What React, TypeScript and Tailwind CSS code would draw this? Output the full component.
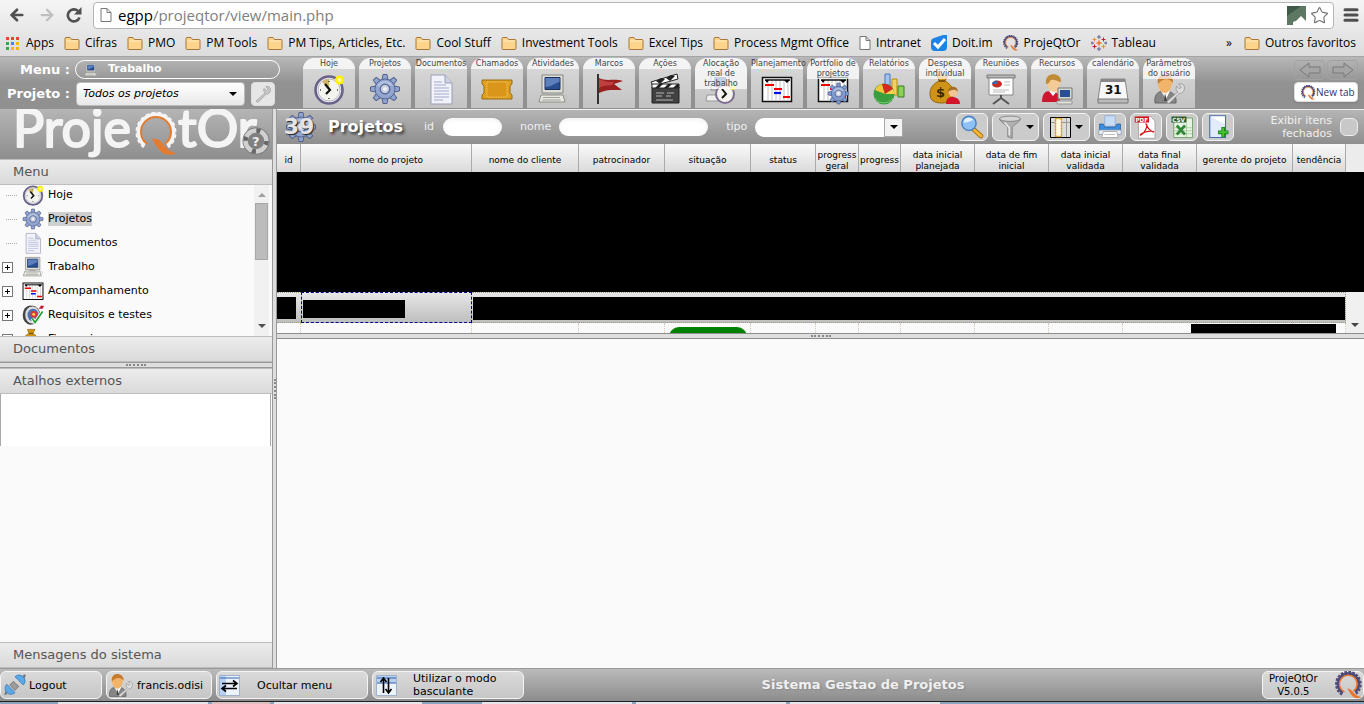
import React, { useState } from "react";
import { ArrowLeft, ArrowRight, Star, Menu as MenuIcon } from "lucide-react";

type IconProps = { className?: string };

const Svg = ({ className = "h-8 w-8", children }: { className?: string; children: React.ReactNode }) => (
  <svg viewBox="0 0 32 32" className={`shrink-0 ${className}`} aria-hidden="true">
    {children}
  </svg>
);

const ClockIcon = ({ className }: IconProps) => (
  <Svg className={className}>
    <circle cx="16" cy="17" r="13.5" fill="#efeff2" stroke="#6a6289" strokeWidth="2.6" />
    <circle cx="16" cy="17" r="11" fill="#f4f4ef" stroke="#b9b7c8" strokeWidth="1" />
    <path d="M16 17 9 8.5a10 10 0 0 1 7-2.3z" fill="#d2b566" />
    <path d="m12 11 5 6-4 4" fill="none" stroke="#111" strokeWidth="2.2" />
    <path d="M16 8v1M16 25v1M7 17h1M24 17h1" stroke="#444" strokeWidth="1.5" />
    <circle cx="26.5" cy="7" r="4.5" fill="#fff000" />
    <circle cx="26.5" cy="7" r="2" fill="#fffcb0" />
  </Svg>
);

const GearShape = ({ fill = "#92a5d0" }: { fill?: string }) => (
  <g>
    <g fill={fill} stroke="#53628e" strokeWidth="1">
      {[0, 45, 90, 135, 180, 225, 270, 315].map((angle) => (
        <path key={angle} d="m13 7 1-5.500h4L19 7z" transform={`rotate(${angle} 16 16)`} />
      ))}
      <circle cx="16" cy="16" r="10" />
    </g>
    <circle cx="16" cy="16" r="9.3" fill={fill} />
    <path d="M8 13a9 9 0 0 1 16 0c-5-2-11 3-16 0" fill="#c2cde6" opacity=".7" />
    <circle cx="16" cy="16" r="4.8" fill="#c6cee0" stroke="#53628e" strokeWidth="1.2" />
    <circle cx="16" cy="16" r="2" fill="#eef0f5" />
  </g>
);

const GearIcon = ({ className }: IconProps) => (
  <Svg className={className}>
    <GearShape />
  </Svg>
);

const DocIcon = ({ className }: IconProps) => (
  <Svg className={className}>
    <path d="M6 2h14l7 8v21H6z" fill="#f1f2fa" stroke="#9a9fb6" />
    <path d="M20 2v8h7" fill="#cdd2e6" stroke="#9a9fb6" />
    <path d="M9 9h8M9 12h12M9 15h15M9 18h15M9 21h15M9 24h15M9 27h9" stroke="#c9cee4" strokeWidth="1.8" />
  </Svg>
);

const TicketIcon = ({ className }: IconProps) => (
  <Svg className={className}>
    <path d="M1 7h30v4l-2 2v7l2 2v4H1v-4l2-2v-7l-2-2z" fill="#e0a022" stroke="#9c6a08" />
    <path d="M6 9h20v15H6z" fill="#d9961a" stroke="#f2c45c" strokeDasharray="1.5 1" />
  </Svg>
);

const ComputerIcon = ({ className }: IconProps) => (
  <Svg className={className}>
    <path d="M5 2h21v18H5z" fill="#dfdfda" stroke="#85857f" />
    <path d="M8 4.500h15v12H8z" fill="#294f92" stroke="#1a2f5e" />
    <path d="M8.500 5h14v4c-5 1-8 5-14 5z" fill="#5d80bc" />
    <path d="M11 20h9v2h-9z" fill="#b5b5af" />
    <path d="M4 22h22l2 7H2z" fill="#e9e9e4" stroke="#8e8e88" />
    <path d="M6 24.500h17M5.500 27h18" stroke="#a2a29c" />
    <path d="M27 22c4 0 3 4 1 5" fill="none" stroke="#bbb" />
  </Svg>
);

const FlagIcon = ({ className }: IconProps) => (
  <Svg className={className}>
    <path d="M4 1h2v30H4z" fill="#333" />
    <path d="M6 5c8 4 14 0 24 3l-9 3 8 6c-9 0-15-1-23 3z" fill="#9a2020" />
    <path d="M6 6c7 3 10 3 15 3l-2 3c-5 1-9 0-13 3z" fill="#c94848" opacity=".8" />
  </Svg>
);

const ClapIcon = ({ className }: IconProps) => (
  <Svg className={className}>
    <path d="M2 9 28 1l1 5L4 13z" fill="#fff" stroke="#222" />
    <path d="m7 8 4 3 5-5-4-1zM17 5l4 3 5-5-4-1z" fill="#222" />
    <path d="M3 14h27v16H3z" fill="#414141" stroke="#222" />
    <path d="M3 11h27v4H3z" fill="#fff" stroke="#222" />
    <path d="m6 15 4-4h4l-4 4zM15 15l4-4h4l-4 4zM24 15l4-4h2v3l-1 1z" fill="#222" />
    <path d="M7 20h8m3 0h7M7 23h6m4 0h5M7 27h17" stroke="#b5b5b5" />
  </Svg>
);

const GanttShape = () => (
  <g>
    <path d="M1.500 4.500h29v24h-29z" fill="#fff" stroke="#111" strokeWidth="1.5" />
    <path d="M7 6v21M11 6v21M15 6v21M19 6v21M23 6v21M27 6v21" stroke="#c4c4c4" />
    <path d="M4 7h25" stroke="#111" strokeWidth="1.5" />
    <path d="m4 7 2 3 2-3zm19 0 3 3 3-3z" />
    <path d="M4 12h9M13 16h8M22 24h7" stroke="#f00000" strokeWidth="2.2" />
    <path d="M13 20h7" stroke="#0011f0" strokeWidth="2.2" />
  </g>
);

const GanttIcon = ({ className }: IconProps) => (
  <Svg className={className}>
    <GanttShape />
  </Svg>
);

const WorkClockIcon = ({ className }: IconProps) => (
  <Svg className={className}>
    <path d="M6 1h18v16H6z" fill="#dfdfda" stroke="#85857f" />
    <path d="M9 4h12v10H9z" fill="#3f63a4" />
    <path d="M2 22h20v6H1z" fill="#eee" stroke="#999" />
    <circle cx="20" cy="21" r="9" fill="#f5f3ee" stroke="#7e6d93" strokeWidth="2" />
    <path d="m17 16 4 5-4 4" fill="none" stroke="#111" strokeWidth="2" />
    <circle cx="28" cy="14" r="3" fill="#ffe94a" />
  </Svg>
);

const PortfolioIcon = ({ className }: IconProps) => (
  <Svg className={className}>
    <GanttShape />
    <g transform="translate(10 9) scale(.72)">
      <GearShape fill="#7d9bcf" />
    </g>
  </Svg>
);

const ChartIcon = ({ className }: IconProps) => (
  <Svg className={className}>
    <path d="M12 1h5v16h-5z" fill="#a3c4f2" stroke="#4a77bb" />
    <path d="M19 6h5v16h-5z" fill="#f5d065" stroke="#b98a12" />
    <path d="M25 13h6v11h-6z" fill="#8cd05a" stroke="#35801a" />
    <circle cx="11" cy="21" r="10.5" fill="#3a9e3d" />
    <path d="M2 25c2 6 14 7 18 0" fill="none" stroke="#7cc97e" />
    <path d="m12 21-10-4a10 10 0 0 1 7-6z" fill="#f2c53c" />
    <path d="m12 21-3-10a10 10 0 0 1 11 5z" fill="#d22a20" />
    <path d="m12 21 8-5 2 5z" fill="#f4d24e" />
  </Svg>
);

const MoneyIcon = ({ className }: IconProps) => (
  <Svg className={className}>
    <path d="M8 2h11l-3 6c7 4 9 9 8 14-1 6-4 8-11 8S1 28 1 21c0-6 3-10 9-13z" fill="#cf9417" stroke="#94640a" />
    <path d="M10 8h6" stroke="#7c5205" strokeWidth="2" />
    <text x="7" y="24" fontSize="13" fontWeight="700" fontFamily="DejaVu Sans, sans-serif" fill="#3c2a05">$</text>
    <path d="M17 31c0-6 3-7 6-7s8 1 8 7z" fill="#d3142a" />
    <circle cx="24" cy="19" r="4.5" fill="#f3c592" />
    <path d="M19 19c0-7 10-7 10 0-2-3-6-3-10 0" fill="#a56d27" />
  </Svg>
);

const BoardIcon = ({ className }: IconProps) => (
  <Svg className={className}>
    <path d="M2 2h28v3H2z" fill="#bbb" stroke="#777" />
    <path d="M4 5h24v17H4z" fill="#fff" stroke="#888" />
    <ellipse cx="12" cy="11" rx="5" ry="3.5" fill="#cc2a2a" />
    <path d="M12 11V7.500c-3 0-5 2-5 3.500z" fill="#4167ac" />
    <path d="M19 9h6M19 12h6M8 17h16M8 19h12" stroke="#bbb" />
    <path d="M16 22v3m0 0-8 6m8-6 8 6" stroke="#555" strokeWidth="2" />
  </Svg>
);

const PersonIcon = ({ className }: IconProps) => (
  <Svg className={className}>
    <path d="M1 29c0-8 3-11 8-11s10 2 10 11z" fill="#cf1631" />
    <path d="m8 18 4 5 4-5z" fill="#fff" />
    <path d="M6 8c0-7 13-7 13 0 0 6-2 11-6 11S6 14 6 8" fill="#f4cb96" />
    <path d="M5 11C3-2 21-1 20 9c-3 0-6-3-10-2-2 1-1 4-5 4" fill="#bf8c35" />
    <path d="M17 15h14v11H17z" fill="#d9d9d4" stroke="#777" />
    <path d="M19 17h10v7H19z" fill="#294f92" />
    <path d="M16 28h15v3H16z" fill="#e2e2dd" stroke="#999" />
  </Svg>
);

const CalendarIcon = ({ className }: IconProps) => (
  <Svg className={className}>
    <path d="M4 6h24l3 21H1z" fill="#f7f7f7" stroke="#888" />
    <path d="M4 6h24v3H4z" fill="#888" />
    <path d="M1 26h30v4H1z" fill="#bbb" stroke="#777" />
    <text x="8" y="21" fontSize="12" fontWeight="700" fontFamily="DejaVu Sans, sans-serif" fill="#111">31</text>
  </Svg>
);

const WrenchPath = ({ fill = "#c9c9c9" }: { fill?: string }) => (
  <path
    d="M29 6a6 6 0 0 0-8-3l4 4-3 3-4-4c-2 4 0 7 2 8L5 27c-2 2 1 5 3 3l14-14c4 1 8-3 7-10z"
    fill={fill}
    stroke="#8a8a8a"
  />
);

const UserWrenchIcon = ({ className }: IconProps) => (
  <Svg className={className}>
    <path d="M2 30c-1-9 3-12 10-12s12 4 11 12z" fill="#868686" stroke="#666" />
    <path d="m8 18 5 8 4-8z" fill="#fff" />
    <path d="m12 20 2 8h-3z" fill="#444" />
    <path d="M5 9c0-8 14-8 14 0 0 6-3 11-7 11S5 15 5 9" fill="#f1b468" />
    <path d="M5 11C2-2 21-2 20 10c-4-5-10-5-15 1" fill="#c67a30" />
    <g transform="translate(11 9) scale(.7)">
      <WrenchPath fill="#ddd" />
    </g>
  </Svg>
);

const TargetIcon = ({ className }: IconProps) => (
  <Svg className={className}>
    <ellipse cx="12" cy="16" rx="11" ry="14" fill="#444" />
    <ellipse cx="15" cy="16" rx="11" ry="13" fill="#dcdcdc" stroke="#333" />
    <ellipse cx="16" cy="16" rx="8" ry="9" fill="#4672b8" />
    <circle cx="17" cy="15" r="5" fill="#e13a2e" />
    <circle cx="17" cy="15" r="2" fill="#ffd94d" />
    <path d="m15 21 4 6L30 11" fill="none" stroke="#fff" strokeWidth="5" />
    <path d="m15 21 4 6L30 11" fill="none" stroke="#25a12d" strokeWidth="2.5" />
    <path d="m24 7 4-5 4 1-2 4z" fill="#c71a2f" />
  </Svg>
);

const FolderIcon = () => (
  <svg viewBox="0 0 16 14" className="h-3.5 w-4 shrink-0" aria-hidden="true">
    <path d="M1 12.500v-10q0-1 1-1h4l1.500 2H14q1 0 1 1v8q0 1-1 1H2q-1 0-1-1z" fill="#fcd48b" stroke="#a9773d" />
    <path d="M2 5h12" stroke="#ffedc4" />
  </svg>
);

const PageIcon = () => (
  <svg viewBox="0 0 12 15" className="h-4 w-3 shrink-0" aria-hidden="true">
    <path d="M1 1h6l4 4v9H1zM7 1v4h4" fill="#fff" stroke="#777" />
  </svg>
);

const ReloadIcon = () => (
  <svg viewBox="0 0 16 16" className="h-4 w-4" aria-hidden="true">
    <path d="M13.500 10.500a6 6 0 1 1-1.500-6.500" fill="none" stroke="#505050" strokeWidth="2.600" />
    <path d="M15.500 0v7.500H8z" fill="#505050" />
  </svg>
);

const QLogo = ({ className = "h-4 w-4" }: IconProps) => (
  <Svg className={className}>
    <path d="M8 27a14 14 0 1 1 16-1" fill="none" stroke="#4d4a78" strokeWidth="2.5" strokeDasharray="3 1.500" />
    <path d="M9 25a12 12 0 1 1 14-1" fill="none" stroke="#4d4a78" strokeWidth="3" />
    <path d="M11 24a10 10 0 1 1 10-1" fill="none" stroke="#e8772e" strokeWidth="1.5" />
    <path d="M14 20c6 0 7 8 16 10-9 4-12-4-16-10z" fill="#e8772e" />
  </Svg>
);

const DoitIcon = () => (
  <svg viewBox="0 0 16 16" className="h-4 w-4 shrink-0" aria-hidden="true">
    <path d="M0 6q0-2 3-3l9-3h4v12q0 4-4 4H4q-4 0-4-4z" fill="#1e83e6" />
    <path d="m3 8 4 4 7-8" fill="none" stroke="#fff" strokeWidth="3" />
  </svg>
);

const TableauIcon = () => (
  <svg viewBox="0 0 16 16" className="h-4 w-4 shrink-0" aria-hidden="true">
    <path d="M8 5.500v5M5.500 8h5" stroke="#e8762d" strokeWidth="1.5" />
    <path d="M8 0v4M6 2h4M8 12v4M6 14h4" stroke="#5b6591" />
    <path d="M3.500 2.500v4M1.500 4.500h4M12.500 9.500v4M10.500 11.500h4" stroke="#eb912c" />
    <path d="M12.500 2.500v4M10.500 4.500h4M3.500 9.500v4M1.500 11.500h4" stroke="#c72035" />
    <path d="M1 6.500v3M0 8h3M15 6.500v3M13 8h3" stroke="#5c6692" />
  </svg>
);

const AppsIcon = () => (
  <svg viewBox="0 0 13 13" className="mr-0.5 h-[13px] w-[13px] shrink-0" aria-hidden="true">
    <path d="M0 0h3v3H0zM5 0h3v3H5zM10 0h3v3h-3z" fill="#ea4335" />
    <path d="M0 5h3v3H0z" fill="#34a853" />
    <path d="M5 5h3v3H5z" fill="#4285f4" />
    <path d="M10 5h3v3h-3zM5 10h3v3H5zM10 10h3v3h-3z" fill="#fbb50b" />
    <path d="M0 10h3v3H0z" fill="#34a853" />
  </svg>
);

const Caret = ({ className = "" }: IconProps) => (
  <svg viewBox="0 0 8 4" className={`h-1 w-2 shrink-0 ${className}`} aria-hidden="true">
    <path d="M0 0h8L4 4z" fill="currentColor" />
  </svg>
);

const bookmarks = [
  { label: "Apps", icon: <AppsIcon /> },
  { label: "Cifras", icon: <FolderIcon /> },
  { label: "PMO", icon: <FolderIcon /> },
  { label: "PM Tools", icon: <FolderIcon /> },
  { label: "PM Tips, Articles, Etc.", icon: <FolderIcon /> },
  { label: "Cool Stuff", icon: <FolderIcon /> },
  { label: "Investment Tools", icon: <FolderIcon /> },
  { label: "Excel Tips", icon: <FolderIcon /> },
  { label: "Process Mgmt Office", icon: <FolderIcon /> },
  { label: "Intranet", icon: <PageIcon /> },
  { label: "Doit.im", icon: <DoitIcon /> },
  { label: "ProjeQtOr", icon: <QLogo /> },
  { label: "Tableau", icon: <TableauIcon /> },
];

const shortcuts = [
  { label: "Hoje", Icon: ClockIcon },
  { label: "Projetos", Icon: GearIcon },
  { label: "Documentos", Icon: DocIcon },
  { label: "Chamados", Icon: TicketIcon },
  { label: "Atividades", Icon: ComputerIcon },
  { label: "Marcos", Icon: FlagIcon },
  { label: "Ações", Icon: ClapIcon },
  { label: "Alocação real de trabalho", Icon: WorkClockIcon },
  { label: "Planejamento", Icon: GanttIcon },
  { label: "Portfolio de projetos", Icon: PortfolioIcon },
  { label: "Relatórios", Icon: ChartIcon },
  { label: "Despesa individual", Icon: MoneyIcon },
  { label: "Reuniões", Icon: BoardIcon },
  { label: "Recursos", Icon: PersonIcon },
  { label: "calendário", Icon: CalendarIcon },
  { label: "Parâmetros do usuário", Icon: UserWrenchIcon },
];

const treeItems = [
  { label: "Hoje", Icon: ClockIcon, expandable: false },
  { label: "Projetos", Icon: GearIcon, expandable: false },
  { label: "Documentos", Icon: DocIcon, expandable: false },
  { label: "Trabalho", Icon: ComputerIcon, expandable: true },
  { label: "Acompanhamento", Icon: GanttIcon, expandable: true },
  { label: "Requisitos e testes", Icon: TargetIcon, expandable: true },
  { label: "Financeiro", Icon: MoneyIcon, expandable: true },
];

const columns = [
  { label: "id", width: "w-6" },
  { label: "nome do projeto", width: "w-[171px]" },
  { label: "nome do cliente", width: "w-[107px]" },
  { label: "patrocinador", width: "w-[86px]" },
  { label: "situação", width: "w-[86px]" },
  { label: "status", width: "w-[65px]" },
  { label: "progress geral", width: "w-[43px]" },
  { label: "progress", width: "w-[42px]" },
  { label: "data inicial planejada", width: "w-[74px]" },
  { label: "data de fim inicial", width: "w-[74px]" },
  { label: "data inicial validada", width: "w-[74px]" },
  { label: "data final validada", width: "w-[74px]" },
  { label: "gerente do projeto", width: "w-24" },
  { label: "tendência", width: "w-[53px]" },
];

const BrowserBar = () => (
  <div className="bg-linear-to-b from-[#f5f5f5] to-[#dcdcdc] font-['Open_Sans','Noto_Sans',sans-serif] text-black">
    <div className="flex h-[30px] items-center px-2">
      <button aria-label="Voltar"><ArrowLeft className="h-[18px] w-[18px] text-[#505050]" strokeWidth={3.5} /></button>
      <button aria-label="Avançar" className="ml-3"><ArrowRight className="h-[18px] w-[18px] text-[#bfbfbf]" strokeWidth={3} /></button>
      <button aria-label="Recarregar" className="mr-px ml-2.5"><ReloadIcon /></button>
      <div className="ml-2.5 flex h-[27px] flex-1 items-center rounded-sm border border-[#b5b5b5] bg-white pr-1 pl-1.5">
        <PageIcon />
        <span className="ml-1.5 text-[15px] text-[#808080]">
          <span className="text-black">egpp</span>/projeqtor/view/main.php
        </span>
        <svg viewBox="0 0 19 19" className="ml-auto h-[19px] w-[19px]" aria-hidden="true">
          <path d="M0 0h19v19H0z" fill="#5d7762" />
          <path d="M0 10 14 0H0z" fill="#3f5a48" />
          <path d="M6 17q0-2 3-2l5-5 5 5v4H6z" fill="#fff" />
        </svg>
        <Star className="ml-1 h-[19px] w-[19px] text-[#777]" strokeWidth={1.5} />
      </div>
      <button aria-label="Menu do navegador" className="ml-2 -mr-1"><MenuIcon className="h-[18px] w-[18px] text-[#505050]" strokeWidth={4} /></button>
    </div>
    <nav className="flex h-[27px] items-center border-b border-[#a5a5a5] pr-2 pl-1.5 text-xs whitespace-nowrap">
      <div className="flex items-center gap-2.5">
        {bookmarks.map((b) => (
          <a key={b.label} href="#" className="flex items-center gap-[5px]">
            {b.icon}
            {b.label}
          </a>
        ))}
      </div>
      <span className="mr-3 ml-auto">»</span>
      <a href="#" className="flex items-center gap-[5px]">
        <FolderIcon />
        Outros favoritos
      </a>
    </nav>
  </div>
);

const AppHeader = () => (
  <header className="flex h-[52px] items-start bg-linear-to-b from-[#b8b8b8] via-[#929292] to-[#909090]">
    <div className="mr-[23px] w-[280px] shrink-0 text-[13px] font-bold text-white">
      <div className="flex h-[25px] items-center">
        <span className="w-[70px] text-right">Menu :</span>
        <button className="ml-[5px] flex h-[19px] w-[205px] items-center gap-2.5 rounded-full border border-white pl-2 text-[11px]">
          <ComputerIcon className="h-3.5 w-3.5" />
          Trabalho
        </button>
      </div>
      <div className="flex h-6 items-center">
        <label htmlFor="projeto" className="w-[70px] text-right">Projeto :</label>
        <div className="relative ml-1.5">
          <select
            id="projeto"
            className="block h-6 w-[169px] appearance-none rounded-sm border border-[#bbb] bg-linear-to-b from-white to-[#e8e8e8] pl-1.5 text-[11px] font-normal text-black italic"
          >
            <option>Todos os projetos</option>
          </select>
          <Caret className="pointer-events-none absolute top-2.5 right-2 text-black" />
        </div>
        <button aria-label="Parâmetros do projeto" className="ml-1.5 flex h-6 w-6 items-center justify-center rounded border border-[#ddd] bg-[#e6e6e6]">
          <Svg className="h-[18px] w-[18px]"><WrenchPath /></Svg>
        </button>
      </div>
    </div>
    <nav className="flex gap-1 pt-px">
      {shortcuts.map(({ label, Icon }) => (
        <a
          key={label}
          href="#"
          className="relative flex h-[50px] w-[52px] shrink-0 items-end justify-center rounded-t-xl bg-linear-to-b from-[#dcdcdc] to-[#c3c3c3] pb-[3px]"
        >
          <Icon />
          <span className="absolute inset-x-0 top-0 rounded-t-xl bg-white/70 pt-px text-center text-[8px] leading-[10px] text-[#444]">
            {label}
          </span>
        </a>
      ))}
    </nav>
    <div className="mr-1.5 ml-auto w-16 pt-[3px]">
      <div className="flex gap-0.5">
        {["Anterior", "Próximo"].map((label, i) => (
          <button key={label} aria-label={label} className="flex h-5 flex-1 items-center justify-center rounded border border-[#a2a2a2]">
            <svg viewBox="0 0 24 16" className="h-4 w-6" aria-hidden="true">
              <path
                d={i === 0 ? "M2 8 11 1v4h11v6H11v4z" : "M22 8 13 1v4H2v6h11v4z"}
                fill="#a5a5a5"
                stroke="#787878"
              />
            </svg>
          </button>
        ))}
      </div>
      <button className="mt-0.5 flex h-5 w-full items-center rounded border border-[#ddd] bg-white pl-1.5 font-['Open_Sans','Noto_Sans',sans-serif] text-[10px] whitespace-nowrap text-[#333366] shadow">
        <QLogo className="h-[15px] w-[15px]" />
        New tab
      </button>
    </div>
  </header>
);

const BrandLogo = () => (
  <div className="relative h-[50px] overflow-hidden bg-linear-to-b from-[#b5b5b5] to-[#8e8e8e]">
    <svg viewBox="0 0 272 50" className="h-[50px] w-[272px]" role="img" aria-label="ProjeQtOr">
      <g fill="#f4f4f4" stroke="#f4f4f4" strokeWidth="2" strokeLinejoin="round" fontFamily="Lato, sans-serif" fontSize="52">
        <text x="13" y="38">Proje</text>
        <text x="178" y="38">tOr</text>
      </g>
      <path d="M145 36a17 17 0 1 1 22 0" fill="none" stroke="#f4f4f4" strokeWidth="5" />
      <path d="M144 38a19 19 0 1 1 24 0" fill="none" stroke="#f4f4f4" strokeWidth="3" strokeDasharray="3.500 2.500" />
      <path d="M147 35a15 15 0 1 1 18 0" fill="none" stroke="#e37b31" strokeWidth="2" />
      <path d="M152 30c12-2 11 13 25 14-14 6-19-4-25-14z" fill="#e37b31" />
      <circle cx="256" cy="32" r="13.5" fill="#6f6f6f" />
      <circle cx="256" cy="32" r="10.5" fill="#808080" stroke="#d0d0d0" strokeWidth="4.5" />
      <circle cx="256" cy="32" r="10.5" fill="none" stroke="#666" strokeWidth="4.5" strokeDasharray="4 12.500" />
      <text x="252" y="37" fontSize="13" fontWeight="700" fontFamily="DejaVu Sans, sans-serif" fill="#eee">?</text>
    </svg>
  </div>
);

const PaneTitle = ({ children }: { children: React.ReactNode }) => (
  <h2 className="flex h-[26px] shrink-0 items-center border-y border-[#bdbdbd] bg-linear-to-b from-[#ececec] to-[#dadada] pl-[13px] text-[13px] text-[#555]">
    {children}
  </h2>
);

const Sidebar = ({ selected, onSelect }: { selected: string; onSelect: (label: string) => void }) => (
  <aside className="flex w-[272px] shrink-0 flex-col bg-[#fafafa]">
    <BrandLogo />
    <PaneTitle>Menu</PaneTitle>
    <div className="flex h-[151px] shrink-0 overflow-hidden">
      <ul className="-mt-0.5 flex-1 text-[11px]">
        {treeItems.map(({ label, Icon, expandable }) => (
          <li key={label} className="flex h-6 items-center">
            <span className="flex w-[22px] shrink-0 pl-0.5">
              {expandable ? (
                <button aria-label={`Expandir ${label}`} className="flex h-[11px] w-[11px] items-center justify-center border border-[#777] bg-white">
                  <svg viewBox="0 0 7 7" className="h-[7px] w-[7px]" aria-hidden="true">
                    <path d="M1 3.500h5M3.500 1v5" stroke="#000" />
                  </svg>
                </button>
              ) : (
                <span className="ml-1 w-[11px] border-t border-dotted border-[#aaa]" />
              )}
            </span>
            <Icon className="h-[22px] w-[22px]" />
            <button onClick={() => onSelect(label)} className={`ml-1 leading-[14px] ${selected === label ? "bg-[#cfcfcf]" : ""}`}>
              {label}
            </button>
          </li>
        ))}
      </ul>
      <div className="mr-[3px] flex w-[15px] flex-col items-center bg-[#f1f1f1] py-2">
        <Caret className="rotate-180 text-[#a0a0a0]" />
        <div className="mt-1.5 h-[57px] w-[13px] border border-[#a8a8a8] bg-[#bcbcbc]" />
        <Caret className="mt-auto text-[#505050]" />
      </div>
    </div>
    <PaneTitle>Documentos</PaneTitle>
    <div className="flex h-1.5 shrink-0 items-center justify-center border-y border-[#999] bg-[#dedede]">
      <span className="w-5 border-t-2 border-dotted border-[#888]" />
    </div>
    <PaneTitle>Atalhos externos</PaneTitle>
    <div className="mr-px h-[52px] border-x border-[#aaa] bg-white" />
    <div className="mt-auto">
      <PaneTitle>Mensagens do sistema</PaneTitle>
    </div>
  </aside>
);

const ToolButton = ({ label, caret, children }: { label: string; caret?: boolean; children: React.ReactNode }) => (
  <button
    aria-label={label}
    className={`flex h-7 shrink-0 items-center justify-center gap-1 rounded-md border border-[#f2f2f2] bg-[#cbcbcb] ${caret ? "w-[47px]" : "w-8"}`}
  >
    {children}
    {caret && <Caret className="text-black" />}
  </button>
);

const ListToolbar = () => {
  const [showClosed, setShowClosed] = useState(false);

  return (
    <div className="flex h-[35px] items-center border-t border-[#eee] bg-linear-to-b from-[#b5b5b5] to-[#8e8e8e] pr-1.5 text-[11px] text-[#f0f0f0]">
      <div className="relative ml-2 h-8 w-8 shrink-0">
        <GearIcon />
        <span className="absolute inset-0 -ml-1 text-center text-[22px] leading-8 font-bold text-[#e4e4e4] [text-shadow:1px_1px_1px_#222]">
          39
        </span>
      </div>
      <h1 className="ml-[11px] w-24 text-base font-bold text-white [text-shadow:2px_2px_3px_#333]">Projetos</h1>
      <label htmlFor="filtro-id">id</label>
      <input id="filtro-id" className="ml-[9px] h-[18px] w-[59px] rounded-full bg-white px-2 text-black shadow-inner" />
      <label htmlFor="filtro-nome" className="ml-[18px]">nome</label>
      <input id="filtro-nome" className="ml-2 h-[18px] w-[149px] rounded-full bg-white px-2 text-black shadow-inner" />
      <label htmlFor="filtro-tipo" className="ml-[18px]">tipo</label>
      <div className="relative ml-2">
        <select id="filtro-tipo" className="block h-[19px] w-[148px] appearance-none rounded-l-full bg-white px-2 text-black">
          <option></option>
        </select>
        <span className="pointer-events-none absolute top-0 right-0 flex h-[19px] w-[19px] items-center justify-center border border-[#aaa] bg-[#f3f3f3] text-black">
          <Caret />
        </span>
      </div>
      <div className="ml-auto flex gap-1">
        <ToolButton label="Pesquisar">
          <Svg className="h-6 w-6">
            <path d="m18 19 10 9" stroke="#a36a12" strokeWidth="6" strokeLinecap="round" />
            <path d="m19 20 9 8" stroke="#f7b733" strokeWidth="4" strokeLinecap="round" />
            <circle cx="12" cy="11" r="9.5" fill="#8ec2f5" stroke="#4c82c5" strokeWidth="2" />
            <path d="M5 10a7 7 0 0 1 13-3c-4 0-7 4-13 3" fill="#e3f2ff" />
          </Svg>
        </ToolButton>
        <ToolButton label="Filtrar" caret>
          <Svg className="h-6 w-6">
            <path d="M2 5c0 4 10 8 11 12v12l6 2V17c1-4 11-8 11-12z" fill="#b0b0b0" stroke="#777" />
            <ellipse cx="16" cy="5" rx="14" ry="3.5" fill="#d5d5d5" stroke="#777" />
            <path d="m9 10 6 7v10" fill="none" stroke="#ececec" strokeWidth="2" />
          </Svg>
        </ToolButton>
        <ToolButton label="Colunas" caret>
          <svg viewBox="0 0 21 21" className="h-[21px] w-[21px]" aria-hidden="true">
            <path d="M.500.500h20v20H.500z" fill="#ddd" stroke="#000" />
            <path d="M5.500 1v19M11.500 1v19M16.500 1v19M1 5.500h19" stroke="#999" />
            <path d="M5.500 1.500h6v18h-6z" fill="#fffbe0" stroke="#d59d0c" strokeWidth="1.5" strokeDasharray="2 1" />
          </svg>
        </ToolButton>
        <ToolButton label="Imprimir">
          <Svg className="h-6 w-6">
            <path d="M9 1h14v14H9z" fill="#c7dcf5" stroke="#8aa8cc" />
            <path d="M2 12h5l2 4h14l2-4h5v9H2z" fill="#3c8ddb" stroke="#2562a4" />
            <path d="M1 20h30v6H1z" fill="#e9eef5" stroke="#8796ab" />
            <path d="M7 22h18l2 8H5z" fill="#fff" stroke="#999" />
            <path d="M9 26h14" stroke="#aaa" />
          </Svg>
        </ToolButton>
        <ToolButton label="Exportar PDF">
          <Svg className="h-6 w-6">
            <path d="M6 2h16l6 6v23H6z" fill="#fff" stroke="#999" />
            <path d="M1 2h19v8H1z" fill="#d51515" />
            <text x="2" y="9" fontSize="7.5" fontWeight="700" fontFamily="DejaVu Sans, sans-serif" fill="#fff">PDF</text>
            <path d="M16 12c3 0 0 11-7 15-3 0 6-7 17-5 2 2-6 0-10-10z" fill="none" stroke="#d51515" strokeWidth="1.6" />
          </Svg>
        </ToolButton>
        <ToolButton label="Exportar CSV">
          <Svg className="h-6 w-6">
            <path d="M5 4h25v26H5z" fill="#e8f3e3" stroke="#5b9150" />
            <path d="M5 17h25M5 21h25M5 25h25M22 11v19" stroke="#9cc58f" />
            <path d="M2 2h20v8H2z" fill="#285b2a" />
            <text x="3" y="9" fontSize="7.5" fontWeight="700" fontFamily="DejaVu Sans, sans-serif" fill="#fff">CSV</text>
            <path d="m9 14 11 12M20 14 9 26" stroke="#32883a" strokeWidth="3.5" />
          </Svg>
        </ToolButton>
        <ToolButton label="Novo item">
          <Svg className="h-6 w-6">
            <path d="M5 1h21v29H5z" fill="#e2ebfb" stroke="#4a6cb0" strokeWidth="1.5" />
            <path d="M6 2h19v10z" fill="#fff" />
            <path d="M23 16v14M16 23h14" stroke="#17821b" strokeWidth="5" />
            <path d="M23 17v12M17 23h12" stroke="#44c530" strokeWidth="2.5" />
          </Svg>
        </ToolButton>
      </div>
      <label className="flex w-[124px] items-center justify-end gap-2 text-right leading-[13px]">
        <span className="w-16">Exibir itens fechados</span>
        <input
          type="checkbox"
          checked={showClosed}
          onChange={(e) => setShowClosed(e.target.checked)}
          className="h-[18px] w-[18px] appearance-none rounded-md border border-[#eee] bg-[#c8c8c8] checked:bg-[#777]"
        />
      </label>
    </div>
  );
};

const ProjectTable = () => (
  <div className="relative h-[189px] overflow-hidden bg-[#fafafa]">
    <table className="w-full table-fixed border-separate border-spacing-0 text-[9px] leading-[11px]">
      <colgroup>
        {columns.map((c) => (
          <col key={c.label} className={c.width} />
        ))}
        <col />
      </colgroup>
      <thead>
        <tr className="h-7 bg-linear-to-b from-[#fafafa] to-[#dadada]">
          {columns.map((c) => (
            <th key={c.label} scope="col" className="overflow-hidden border-r border-[#aaa] p-0 pt-[5px] align-middle font-normal">
              {c.label}
            </th>
          ))}
          <td className="bg-[#ececec] p-0" />
        </tr>
      </thead>
      <tbody>
        <tr className="h-[120px]">
          <td colSpan={15} className="bg-black p-0" />
        </tr>
        <tr className="h-[31px] bg-linear-to-b from-[#e8e8e8] to-[#bdbdbd]">
          <td className="border-y border-dotted border-[#a59b85] p-0">
            <div className="h-[22px] w-[19px] bg-black" />
          </td>
          <td className="border border-dashed border-[#00008b] p-0 pt-0.5 pl-px">
            <div className="h-[18px] w-[102px] bg-black" />
          </td>
          <td colSpan={12} className="border-y border-r border-dotted border-[#a59b85] p-0 pt-px pl-px">
            <div className="h-[23px] bg-black" />
          </td>
          <td className="bg-[#f0f0f0] p-0" />
        </tr>
        <tr className="h-[30px]">
          {columns.map((c) => (
            <td key={c.label} className="relative border-r border-dotted border-[#cfc9ba] p-0 align-top">
              {c.label === "situação" && <div className="mx-auto mt-1 h-5 w-[78px] rounded-full bg-[#008000]" />}
              {c.label === "gerente do projeto" && <div className="absolute top-px -left-1.5 z-10 h-5 w-[145px] bg-black" />}
            </td>
          ))}
          <td className="bg-[#f0f0f0] p-0 align-top">
            <Caret className="mx-auto text-[#444]" />
          </td>
        </tr>
      </tbody>
    </table>
  </div>
);

const footerButton =
  "flex h-7 shrink-0 items-center rounded-md border border-[#f5f5f5] bg-linear-to-b from-[#dadada] to-[#c6c6c6] text-left text-[11px] leading-[13px] text-black";

const SwitchIcon = ({ vertical }: { vertical?: boolean }) => (
  <svg viewBox="0 0 21 21" className="h-[21px] w-[21px] shrink-0" aria-hidden="true">
    <path d="M.500.500h20v20H.500z" fill="#edf3fb" stroke="#9fb2cc" />
    <path d={vertical ? "M1 1h19v7H1z" : "M1 1h6v19H1z"} fill="#b9d0f0" />
    <path d={vertical ? "M1 8h19M1 3h19" : "M1 3h19"} stroke="#2f62ae" />
    <g transform={vertical ? "rotate(90 10.500 10.500)" : undefined} fill="none" stroke="#000" strokeWidth="1.6">
      <path d="M3 8.500h15m-4-3 4 3-4 3M18 13.500H3m4-3-4 3 4 3" />
    </g>
  </svg>
);

const AppFooter = () => (
  <footer className="flex h-[33px] shrink-0 items-center gap-1 border-t border-[#999] bg-linear-to-b from-[#bbb] to-[#8c8c8c]">
    <button className={`${footerButton} w-[102px] gap-0.5 pl-0.5`}>
      <Svg className="h-6 w-6">
        <path d="M3 29c1-4 2-6 5-8m16-10c3-2 4-4 5-9" fill="none" stroke="#777" strokeWidth="3" />
        <path d="m9 16 5-5 7 7-5 5z" fill="#9b9b9b" stroke="#666" />
        <path d="m5 15 11 11c-7 7-18-3-11-11z" fill="#5ba9e8" stroke="#2f73b5" />
        <path d="m16 5 11 11c7-7-3-18-11-11z" fill="#5ba9e8" stroke="#2f73b5" />
      </Svg>
      Logout
    </button>
    <button className={`${footerButton} w-[106px] gap-1 pl-px`}>
      <UserWrenchIcon className="h-[25px] w-[25px]" />
      francis.odisi
    </button>
    <button className={`${footerButton} w-[152px] pl-0.5`}>
      <SwitchIcon />
      <span className="ml-[17px]">Ocultar menu</span>
    </button>
    <button className={`${footerButton} w-[152px] pl-[3px]`}>
      <SwitchIcon vertical />
      <span className="ml-4">Utilizar o modo basculante</span>
    </button>
    <p className="flex-1 pr-15 text-center text-[13px] font-bold text-[#f0f0f0] [text-shadow:1px_1px_2px_#888]">
      Sistema Gestao de Projetos
    </p>
    <a href="#" className={`${footerButton} w-[102px] justify-between pl-1.5`}>
      <span className="text-center text-[10px]">
        ProjeQtOr
        <br />
        V5.0.5
      </span>
      <QLogo className="h-7 w-7" />
    </a>
  </footer>
);

const App = () => {
  const [selected, setSelected] = useState("Projetos");

  return (
    <div className="flex h-screen flex-col overflow-hidden bg-[#fafafa] font-['DejaVu_Sans',sans-serif] text-black">
      <BrowserBar />
      <AppHeader />
      <main className="flex min-h-0 flex-1">
        <Sidebar selected={selected} onSelect={setSelected} />
        <div className="flex w-[5px] shrink-0 items-center justify-center border-x border-[#999] bg-[#dedede]">
          <span className="h-5 border-l-2 border-dotted border-[#888]" />
        </div>
        <section className="flex min-w-0 flex-1 flex-col">
          <ListToolbar />
          <ProjectTable />
          <div className="flex h-1.5 shrink-0 items-center justify-center border-y border-[#8f8f8f] bg-[#dedede]">
            <span className="w-5 border-t-2 border-dotted border-[#888]" />
          </div>
        </section>
      </main>
      <AppFooter />
      {/* System task bar */}
      <div className="flex h-[3px] shrink-0 gap-1 border-t border-[#222] bg-[#8ba3bd] pl-[58px]">
        <span className="w-[150px] bg-[#e6e6ea]" />
        <span className="w-[58px] bg-[#dcc0c0]" />
        <span className="w-[148px] bg-[#e6e6ea]" />
        <span className="ml-14 w-[150px] bg-[#e6e6ea]" />
        <span className="w-[150px] bg-[#e6e6ea]" />
        <span className="w-[150px] bg-[#e6e6ea]" />
      </div>
    </div>
  );
};

export default App;
